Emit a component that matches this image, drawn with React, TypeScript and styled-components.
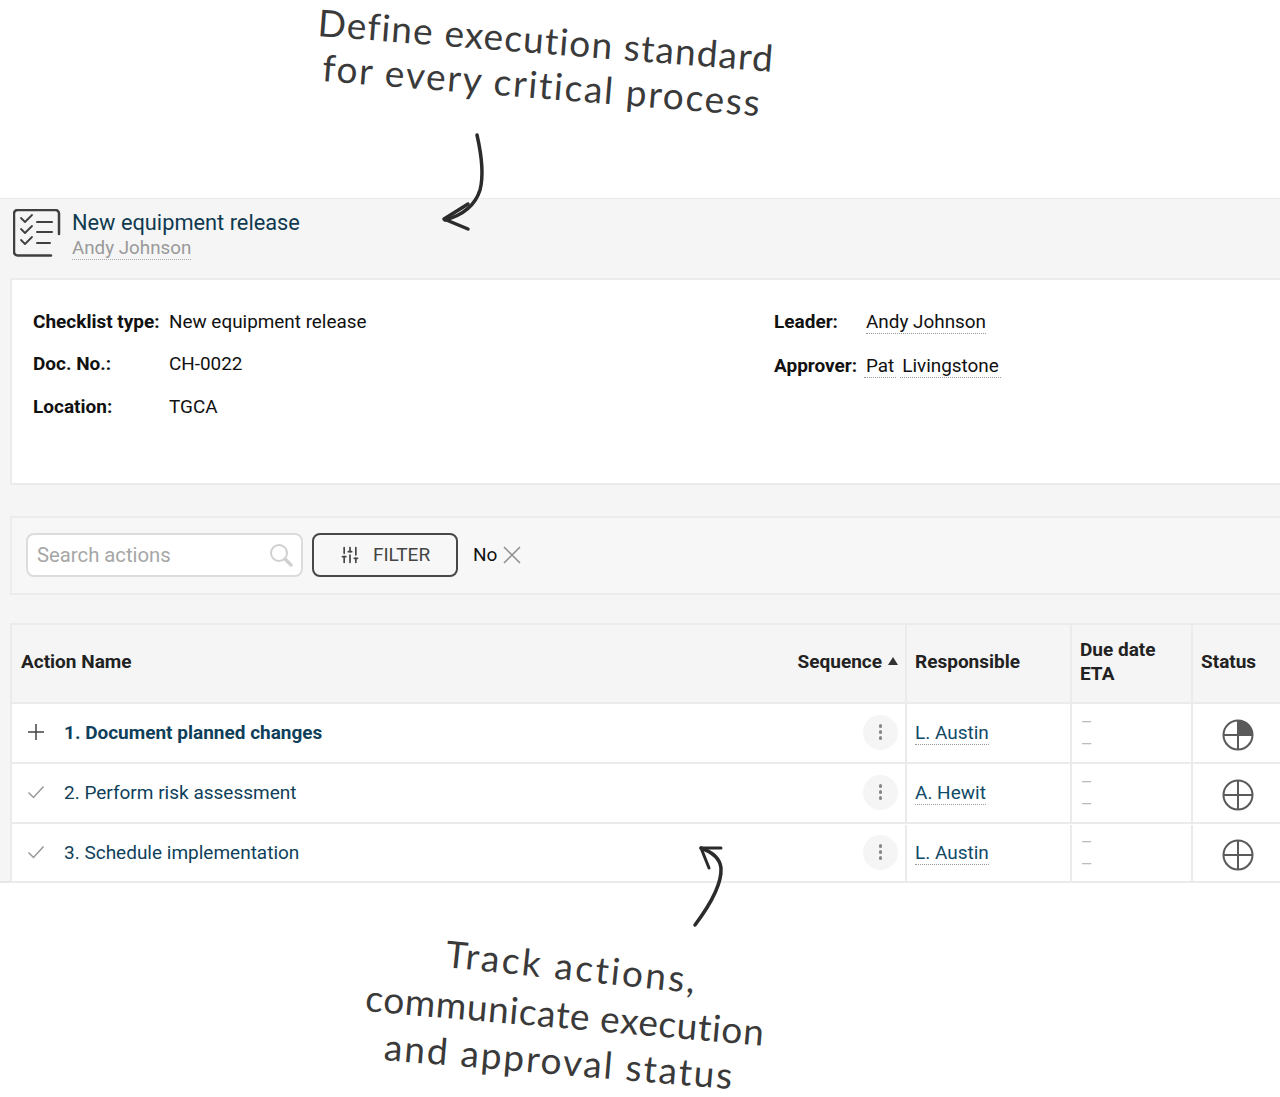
import React from 'react';
import styled, { createGlobalStyle } from 'styled-components';
import { SlidersVertical } from 'lucide-react';

const GlobalStyle = createGlobalStyle`
  html, body {
    margin: 0;
    padding: 0;
    background: #fff;
    font-family: Roboto, "Liberation Sans", sans-serif;
  }
`;

const Page = styled.div`
  position: relative;
  width: 1280px;
  height: 1097px;
  overflow: hidden;
  background: #fff;
`;

const TopNote = styled.div`
  height: 198px;
  box-sizing: border-box;
  padding: 4px 0 0 318px;
`;

const NoteLine = styled.div<{ $pad: number; $top: number; $tilt: number; $spacing: number }>`
  margin-left: ${(p) => p.$pad}px;
  padding-top: ${(p) => p.$top}px;
  width: max-content;
  font-family: Lato, sans-serif;
  font-size: 37px;
  line-height: 36px;
  letter-spacing: ${(p) => p.$spacing}px;
  color: #3a3a3a;
  white-space: nowrap;
  transform: rotate(${(p) => p.$tilt}deg);
  transform-origin: left center;
`;

const BottomNote = styled.div`
  padding: 52px 0 0 366px;
`;

const Panel = styled.div`
  height: 685px;
  box-sizing: border-box;
  background: #f5f5f5;
  border-top: 1px solid #e9e9e9;
  border-bottom: 2px solid #e6e6e6;
  display: flex;
  flex-direction: column;
`;

const Header = styled.div`
  height: 79px;
  flex: none;
  box-sizing: border-box;
  display: flex;
  align-items: flex-start;
  gap: 11px;
  padding: 10px 0 0 13px;
`;

const TitleBlock = styled.div`
  display: flex;
  flex-direction: column;
  align-items: flex-start;
`;

const Title = styled.div`
  font-size: 21.800px;
  line-height: 28px;
  color: #0f3a50;
`;

const Subtitle = styled.span`
  font-size: 18.800px;
  line-height: 22px;
  color: #999;
  border-bottom: 1px dotted #aaa;
`;

const InfoCard = styled.div`
  height: 207px;
  flex: none;
  box-sizing: border-box;
  margin-left: 10px;
  background: #fff;
  border: 2px solid #ebebeb;
  border-right: none;
  display: flex;
  padding: 21px 0 0 21px;
  color: #111;
  font-size: 18.900px;
`;

const InfoColumn = styled.div<{ $width: number; $label: number; $rowGap: number }>`
  width: ${(p) => p.$width}px;
  display: grid;
  grid-template-columns: ${(p) => p.$label}px 1fr;
  grid-auto-rows: 40px;
  row-gap: ${(p) => p.$rowGap}px;
  align-content: start;
  align-items: center;
`;

const InfoLabel = styled.div`
  font-weight: 700;
  font-size: 19px;
`;

const InfoValue = styled.div<{ $split?: boolean }>`
  display: flex;
  gap: 4px;
  margin-left: ${(p) => (p.$split ? -2 : 0)}px;
`;

const Dotted = styled.span<{ $split?: boolean }>`
  border-bottom: 1px dotted #999;
  line-height: 22px;
  margin-top: 2px;
  padding: 0 ${(p) => (p.$split ? 2 : 0)}px;
`;

const FilterBar = styled.div`
  margin: 31px 0 0 10px;
  height: 79px;
  flex: none;
  box-sizing: border-box;
  background: #f7f7f7;
  border: 2px solid #ececec;
  border-right: none;
  display: flex;
  align-items: center;
  padding: 0 0 2px 14px;
`;

const SearchBox = styled.div`
  width: 277px;
  height: 44px;
  box-sizing: border-box;
  background: #fff;
  border: 2px solid #dcdcdc;
  border-radius: 8px;
  display: flex;
  align-items: center;
  justify-content: space-between;
  padding: 0 8px 0 9px;
  font-size: 20.300px;
  color: #a6a6a6;
`;

const FilterButton = styled.button`
  width: 146px;
  height: 44px;
  margin-left: 9px;
  box-sizing: border-box;
  background: transparent;
  border: 2px solid #484848;
  border-radius: 8px;
  display: flex;
  align-items: center;
  justify-content: center;
  gap: 13px;
  font-family: inherit;
  font-size: 19px;
  color: #444;
  padding: 0;
`;

const Chip = styled.div`
  display: flex;
  align-items: center;
  gap: 6px;
  margin-left: 15px;
  font-size: 19px;
  color: #111;
`;

const Table = styled.div`
  margin: 28px 0 0 10px;
  border-top: 2px solid #ebebeb;
  border-left: 2px solid #ebebeb;
`;

const Row = styled.div<{ $head?: boolean }>`
  height: ${(p) => (p.$head ? 79 : 60)}px;
  box-sizing: border-box;
  display: grid;
  grid-template-columns: 895px 165px 121px 1fr;
  background: ${(p) => (p.$head ? '#f5f5f5' : '#fff')};
  border-bottom: 2px solid #ebebeb;

  &:last-child {
    height: 59px;
    padding-top: 1px;
  }
`;

const HeadCell = styled.div<{ $end?: boolean }>`
  display: flex;
  align-items: center;
  justify-content: ${(p) => (p.$end ? 'space-between' : 'flex-start')};
  padding: 0 0 3px ${(p) => (p.$end ? 9 : 8)}px;
  font-size: 19px;
  line-height: 24px;
  font-weight: 700;
  color: #222;
  border-right: 2px solid #ebebeb;

  &:last-child {
    border-right: none;
  }
`;

const SortLabel = styled.div`
  display: flex;
  align-items: center;
  gap: 6px;
  margin-right: 7px;
`;

const SortArrow = styled.span`
  width: 0;
  height: 0;
  border-left: 5px solid transparent;
  border-right: 5px solid transparent;
  border-bottom: 8px solid #333;
  margin-bottom: 3px;
`;

const Cell = styled.div`
  display: flex;
  align-items: center;
  border-right: 2px solid #ebebeb;

  &:last-child {
    border-right: none;
  }
`;

const NameCell = styled(Cell)`
  padding: 0 7px 2px 15px;
`;

const ActionName = styled.div<{ $strong?: boolean }>`
  flex: 1;
  margin-left: 19px;
  font-size: 19px;
  font-weight: ${(p) => (p.$strong ? 700 : 400)};
  color: #0f3f5a;
`;

const MenuDot = styled.div`
  width: 35px;
  height: 35px;
  border-radius: 50%;
  background: #f5f5f5;
  display: flex;
  flex-direction: column;
  align-items: center;
  justify-content: center;
  gap: 2.500px;

  span {
    width: 3.500px;
    height: 3.500px;
    border-radius: 50%;
    background: #888;
  }
`;

const PersonCell = styled(Cell)`
  padding-left: 8px;
  font-size: 19px;
  color: #0f4a68;
`;

const PersonName = styled.span`
  border-bottom: 1px dotted #999;
  line-height: 22px;
`;

const DueCell = styled(Cell)`
  padding: 0 0 0 9px;
  flex-direction: column;
  align-items: flex-start;
  justify-content: center;
  font-size: 14px;
  line-height: 22px;
  color: #bbb;
`;

const StatusCell = styled(Cell)`
  padding: 3px 0 0 29px;
`;

const ArrowOverlay = styled.svg`
  position: absolute;
  left: 0;
  top: 0;
  pointer-events: none;
`;

const ChecklistIcon = () => (
  <svg width="48" height="48" viewBox="0 0 48 48" fill="none" stroke="#404040" strokeLinecap="round" strokeLinejoin="round">
    <path d="M38 46.500H4.500a3.500 3.500 0 0 1-3.500-3.500V4.500A3.500 3.500 0 0 1 4.500 1h38a3.500 3.500 0 0 1 3.500 3.500V25" strokeWidth="2.500" />
    <path d="M8 9l4 4 7-7M8 20l4 4 7-7M8 31l4 4 7-7" strokeWidth="1.800" />
    <path d="M24 13h15M24 23h15M24 34h13" strokeWidth="2" />
  </svg>
);

const SearchIcon = () => (
  <svg width="24" height="24" viewBox="0 0 24 24" fill="none" stroke="#d0d0d0" strokeLinecap="round">
    <circle cx="10" cy="10" r="8" strokeWidth="2" />
    <path d="M16 16l6 6" strokeWidth="3.500" />
  </svg>
);

const CloseIcon = () => (
  <svg width="18" height="18" viewBox="0 0 18 18" fill="none" stroke="#8c8c8c" strokeWidth="1.500">
    <path d="M1 1l16 16M17 1L1 17" />
  </svg>
);

const PlusIcon = () => (
  <svg width="18" height="18" viewBox="0 0 18 18" fill="none" stroke="#444" strokeWidth="1.500">
    <path d="M9 1v16M1 9h16" />
  </svg>
);

const CheckIcon = () => (
  <svg width="18" height="18" viewBox="0 0 18 18" fill="none" stroke="#999" strokeWidth="1.500">
    <path d="M1.500 9.500l5 5 10-11" />
  </svg>
);

const StatusIcon = ({ filled }: { filled?: boolean }) => (
  <svg width="32" height="32" viewBox="0 0 32 32" fill="none" stroke="#5a5a5a" strokeWidth="2">
    {filled && <path d="M16 16V1a15 15 0 0 1 15 15z" fill="#5a5a5a" stroke="none" />}
    <circle cx="16" cy="16" r="14.500" />
    <path d="M16 1v30M1 16h30" />
  </svg>
);

const rows = [
  { name: '1. Document planned changes', person: 'L. Austin', strong: true, filled: true },
  { name: '2. Perform risk assessment', person: 'A. Hewit' },
  { name: '3. Schedule implementation', person: 'L. Austin' },
];

export default function App() {
  return (
    <Page>
      <GlobalStyle />
      <TopNote>
        <NoteLine $pad={0} $top={0} $tilt={4.500} $spacing={1.200}>Define execution standard</NoteLine>
        <NoteLine $pad={5} $top={9} $tilt={4.600} $spacing={1.800}>for every critical process</NoteLine>
      </TopNote>
      <Panel>
        <Header>
          <ChecklistIcon />
          <TitleBlock>
            <Title>New equipment release</Title>
            <Subtitle>Andy Johnson</Subtitle>
          </TitleBlock>
        </Header>
        <InfoCard>
          <InfoColumn $width={741} $label={136} $rowGap={2.500}>
            <InfoLabel>Checklist type:</InfoLabel>
            <InfoValue>New equipment release</InfoValue>
            <InfoLabel>Doc. No.:</InfoLabel>
            <InfoValue>CH-0022</InfoValue>
            <InfoLabel>Location:</InfoLabel>
            <InfoValue>TGCA</InfoValue>
          </InfoColumn>
          <InfoColumn $width={400} $label={92} $rowGap={4}>
            <InfoLabel>Leader:</InfoLabel>
            <InfoValue><Dotted>Andy Johnson</Dotted></InfoValue>
            <InfoLabel>Approver:</InfoLabel>
            <InfoValue $split><Dotted $split>Pat</Dotted><Dotted $split>Livingstone</Dotted></InfoValue>
          </InfoColumn>
        </InfoCard>
        <FilterBar>
          <SearchBox>
            Search actions
            <SearchIcon />
          </SearchBox>
          <FilterButton>
            <SlidersVertical size={20} color="#444" />
            FILTER
          </FilterButton>
          <Chip>
            No
            <CloseIcon />
          </Chip>
        </FilterBar>
        <Table>
          <Row $head>
            <HeadCell $end>
              Action Name
              <SortLabel>
                Sequence
                <SortArrow />
              </SortLabel>
            </HeadCell>
            <HeadCell>Responsible</HeadCell>
            <HeadCell>Due date<br />ETA</HeadCell>
            <HeadCell>Status</HeadCell>
          </Row>
          {rows.map((r) => (
            <Row key={r.name}>
              <NameCell>
                {r.strong ? <PlusIcon /> : <CheckIcon />}
                <ActionName $strong={r.strong}>{r.name}</ActionName>
                <MenuDot><span /><span /><span /></MenuDot>
              </NameCell>
              <PersonCell><PersonName>{r.person}</PersonName></PersonCell>
              <DueCell>
                <div>—</div>
                <div>—</div>
              </DueCell>
              <StatusCell><StatusIcon filled={r.filled} /></StatusCell>
            </Row>
          ))}
        </Table>
      </Panel>
      <BottomNote>
        <NoteLine $pad={80} $top={0} $tilt={6} $spacing={2.400}>Track actions,</NoteLine>
        <NoteLine $pad={0} $top={8} $tilt={5} $spacing={0.700}>communicate execution</NoteLine>
        <NoteLine $pad={19} $top={13} $tilt={4.800} $spacing={1.900}>and approval status</NoteLine>
      </BottomNote>
      <ArrowOverlay width="1280" height="1097" viewBox="0 0 1280 1097" fill="none" stroke="#2b2b2b" strokeWidth="3.500" strokeLinecap="round" strokeLinejoin="round">
        <path d="M477 135c5 22 7 40 3 55-5 16-17 25-35 30" />
        <path d="M468 204l-24 15 24 10" />
        <path d="M695 925c15-20 27-40 26-57-1-9-9-16-20-20" />
        <path d="M701 848h20M701 848l8 20" strokeWidth="3" />
      </ArrowOverlay>
    </Page>
  );
}
